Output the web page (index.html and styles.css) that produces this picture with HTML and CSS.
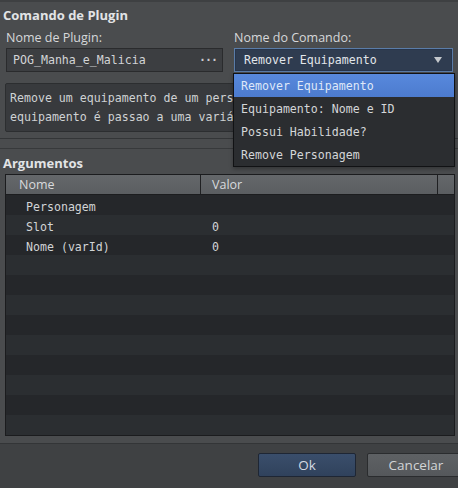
FILE: index.html
```html
<!DOCTYPE html>
<html lang="pt">
<head>
    <meta charset="UTF-8">
    <meta name="viewport" content="width=device-width, initial-scale=1.0">
    <title>Comando de Plugin</title>
    <link rel="stylesheet" href="styles.css">
</head>
<body>
    <div class="window">
        <section class="command">
            <h1 class="group-title">Comando de Plugin</h1>
            <div class="fields">
                <div class="field plugin">
                    <label>Nome de Plugin:</label>
                    <div class="input-box">
                        <span>POG_Manha_e_Malicia</span>
                        <span class="more">···</span>
                    </div>
                </div>
                <div class="field command-name">
                    <label>Nome do Comando:</label>
                    <div class="select-wrap">
                        <div class="select-box">
                            <span>Remover Equipamento</span>
                            <span class="arrow"></span>
                        </div>
                        <!-- open combo list -->
                        <ul class="dropdown">
                            <li class="selected">Remover Equipamento</li>
                            <li>Equipamento: Nome e ID</li>
                            <li>Possui Habilidade?</li>
                            <li>Remove Personagem</li>
                        </ul>
                    </div>
                </div>
            </div>
            <div class="description">
                <div>Remove um equipamento de um personagem. O nome do</div>
                <div>equipamento é passao a uma variável.</div>
            </div>
        </section>

        <section class="arguments">
            <h2 class="group-title">Argumentos</h2>
            <div class="table">
                <div class="table-head">
                    <div class="th">Nome</div>
                    <div class="th">Valor</div>
                    <div class="th corner"></div>
                </div>
                <div class="table-body" id="rows"></div>
            </div>
        </section>

        <div class="footer">
            <button class="btn btn-ok">Ok</button>
            <button class="btn">Cancelar</button>
        </div>
    </div>

    <script>
        // Plugin command arguments
        const args = [
            { name: "Personagem", value: "" },
            { name: "Slot", value: "0" },
            { name: "Nome (varId)", value: "0" }
        ];
        const rows = document.getElementById("rows");

        // 12 visible rows, empty ones keep the stripes
        for (let i = 0; i < 12; i++) {
            const arg = args[i] || { name: "", value: "" };
            const row = document.createElement("div");
            row.classList.add("row");
            if (i % 2 === 1) row.classList.add("alt");
            row.innerHTML = `
                <div class="td name">${arg.name}</div>
                <div class="td">${arg.value}</div>
            `;
            rows.appendChild(row);
        }
    </script>
</body>
</html>
```

FILE: styles.css
```css
* {
    box-sizing: border-box;
}
body {
    margin: 0;
    width: 458px;
    height: 488px;
    overflow: hidden;
    background-color: #4a4c4e;
    font-family: "Open Sans", "Noto Sans", sans-serif;
    color: #d6d8da;
}
.window {
    border-top: 2px solid #3e4042;
    height: 100%;
    display: flex;
    flex-direction: column;
}
.group-title {
    margin: 0;
    font-size: 13px;
    font-weight: bold;
    line-height: 18px;
    color: #e2e4e6;
}
.command {
    padding: 4px 5px 6px 3px;
    border-bottom: 1px solid #333537;
}
.fields {
    display: flex;
    gap: 11px;
    margin-top: 6px;
    padding-left: 3px;
}
.field {
    display: flex;
    flex-direction: column;
}
.field label {
    font-size: 12.5px;
    line-height: 16px;
    margin-bottom: 2px;
}
.plugin {
    width: 218px;
}
.command-name {
    width: 220px;
}
.input-box,
.select-box {
    height: 24px;
    display: flex;
    align-items: center;
    justify-content: space-between;
    font-family: "DejaVu Sans Mono", monospace;
    font-size: 11.6px;
}
.input-box {
    background-color: #3c3e41;
    border: 1px solid #2a2b2d;
    padding: 0 5px 0 6px;
    color: #d2d4d6;
}
.input-box .more {
    font-weight: bold;
    letter-spacing: -1px;
    color: #c8cacc;
}
.select-wrap {
    position: relative;
}
.select-box {
    background-color: #2f3c50;
    border: 1px solid #5a7ca8;
    box-shadow: inset 0 0 0 1px #28354a;
    padding: 0 9px 0 9px;
    color: #e2e6ea;
}
.arrow {
    width: 0;
    height: 0;
    border-left: 4px solid transparent;
    border-right: 4px solid transparent;
    border-top: 6px solid #c4c8cc;
    margin-right: 1px;
}
.dropdown {
    position: absolute;
    left: -1px;
    top: calc(100% + 1px);
    width: 222px;
    margin: 0;
    padding: 0;
    list-style: none;
    background-color: #2b2d30;
    border: 1px solid #111214;
    font-family: "DejaVu Sans Mono", monospace;
    font-size: 11.6px;
    color: #d4d6d8;
    box-shadow: 0 2px 4px rgba(0, 0, 0, 0.3);
    z-index: 1;
}
.dropdown li {
    height: 23px;
    line-height: 24px;
    padding-left: 7px;
}
.dropdown li.selected {
    background: linear-gradient(#5889dc, #4c7bcf);
    color: #dfe8f8;
}
.description {
    margin-top: 11px;
    margin-left: 2px;
    height: 49px;
    padding: 5px 4px 0 4px;
    background-color: #383a3d;
    border: 1px solid #2c2e30;
    border-radius: 2px;
    font-family: "DejaVu Sans Mono", monospace;
    font-size: 11.6px;
    line-height: 19px;
    color: #cfd2d4;
    white-space: nowrap;
    overflow: hidden;
}
.arguments {
    margin-top: 9px;
    border-top: 1px solid #37393b;
    padding: 5px 3px 7px 3px;
}
.table {
    margin: 2px 0 0 2px;
    width: 450px;
    border: 1px solid #1b1c1e;
    background-color: #25272a;
}
.table-head {
    display: flex;
    height: 20px;
    border-bottom: 1px solid #1c1d1f;
    background: linear-gradient(#64676a, #5b5e61);
}
.th {
    font-size: 12.5px;
    line-height: 20px;
    color: #d8dadc;
    border-right: 1px solid #1f2022;
}
.th:first-child {
    width: 195px;
    padding-left: 13px;
}
.th:nth-child(2) {
    width: 237px;
    padding-left: 11px;
}
.th.corner {
    flex: 1;
    border-right: none;
}
.row {
    display: flex;
    height: 20px;
    padding-top: 2px;
    background-color: #25272a;
    font-family: "DejaVu Sans Mono", monospace;
    font-size: 11.6px;
    line-height: 20px;
    color: #d2d4d6;
}
.row.alt {
    background-color: #2b2e31;
}
.td {
    padding-left: 11px;
}
.td.name {
    width: 195px;
    padding-left: 20px;
}
.footer {
    flex: 1;
    display: flex;
    gap: 11px;
    padding: 9px 0 0 258px;
    border-top: 1px solid #333537;
    background-color: #3f4143;
}
.btn {
    flex-shrink: 0;
    width: 98px;
    height: 24px;
    font-family: "Open Sans", "Noto Sans", sans-serif;
    font-size: 13.5px;
    color: #d2d4d6;
    border: 1px solid #2a2c2e;
    border-radius: 2px;
    background: linear-gradient(#5e6164, #55585b);
    padding: 0;
}
.btn-ok {
    border-color: #1e2634;
    background: linear-gradient(#3a4e6b, #30425c);
    color: #d4dae2;
}
```
